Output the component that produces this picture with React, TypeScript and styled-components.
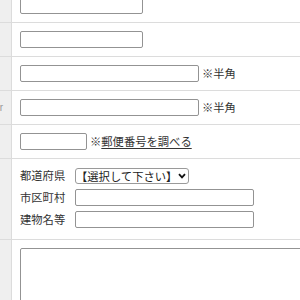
import { createGlobalStyle, styled } from "styled-components";

const GlobalStyle = createGlobalStyle`
  html, body {
    margin: 0;
    padding: 0;
    background: #fff;
    overflow: hidden;
  }
  body {
    font-family: "Noto Sans CJK JP", "Noto Sans", sans-serif;
    color: #333;
  }
`;

const FormTable = styled.div`
  margin-top: -11px;
  width: 420px;
`;

const Row = styled.div`
  display: grid;
  grid-template-columns: 12px 1fr;
  border-bottom: 1px solid #dcdcdc;
`;

const Head = styled.div`
  background: #efefef;
  border-right: 1px solid #dcdcdc;
  display: flex;
  align-items: center;
  justify-content: flex-end;
  overflow: hidden;
  padding-right: 8px;
  white-space: nowrap;
  font-family: "Liberation Sans", Arial, sans-serif;
  font-size: 10px;
  color: #999;
`;

const Cell = styled.div<{ $bottom?: number }>`
  display: flex;
  align-items: center;
  padding: 8px 0 ${(p) => p.$bottom ?? 8}px 8px;
  font-size: 11.3px;
  line-height: 17px;
`;

const TextInput = styled.input<{ $w: number }>`
  box-sizing: border-box;
  width: ${(p) => p.$w}px;
  height: 17px;
  margin: 0;
  border: 1px solid #939393;
  border-radius: 2px;
  background: #fff;
  padding: 0 3px;
  outline: none;
`;

const Note = styled.span`
  margin-left: 3px;
  white-space: nowrap;
`;

const LinkText = styled.a`
  color: #333;
  text-decoration: underline;
  text-underline-offset: 2px;
`;

const Address = styled.div`
  display: flex;
  flex-direction: column;
  gap: 5px;
`;

const AddrLine = styled.div`
  display: flex;
  align-items: center;
  height: 17px;
`;

const AddrLabel = styled.span`
  width: 55px;
  white-space: nowrap;
`;

const SelectWrap = styled.div`
  position: relative;
  display: flex;
`;

const Select = styled.select`
  appearance: none;
  box-sizing: border-box;
  width: 114px;
  height: 16px;
  margin: 0;
  padding: 0 0 0 0;
  border: 1px solid #9a9a9a;
  border-radius: 3px;
  background: #fff;
  font-family: "Noto Sans CJK JP", sans-serif;
  font-size: 11.3px;
  line-height: 14px;
  color: #222;
`;

const Chevron = styled.svg`
  position: absolute;
  right: 3px;
  top: 5px;
  pointer-events: none;
`;

const TextArea = styled.textarea`
  box-sizing: border-box;
  width: 400px;
  height: 80px;
  margin: 0;
  border: 1px solid #939393;
  border-radius: 2px;
  resize: none;
`;

export default function App() {
  return (
    <>
      <GlobalStyle />
      <FormTable>
        <Row>
          <Head />
          <Cell>
            <TextInput $w={123} />
          </Cell>
        </Row>
        <Row>
          <Head />
          <Cell>
            <TextInput $w={123} />
          </Cell>
        </Row>
        <Row>
          <Head />
          <Cell>
            <TextInput $w={179} />
            <Note>※半角</Note>
          </Cell>
        </Row>
        <Row>
          <Head>Fax Number</Head>
          <Cell>
            <TextInput $w={179} />
            <Note>※半角</Note>
          </Cell>
        </Row>
        <Row>
          <Head />
          <Cell>
            <TextInput $w={67} />
            <Note>
              ※<LinkText href="#">郵便番号を調べる</LinkText>
            </Note>
          </Cell>
        </Row>
        <Row>
          <Head />
          <Cell $bottom={11}>
            <Address>
              <AddrLine>
                <AddrLabel>都道府県</AddrLabel>
                <SelectWrap>
                  <Select defaultValue="">
                    <option value="">【選択して下さい】</option>
                  </Select>
                  <Chevron width="8" height="6" viewBox="0 0 8 6">
                    <path d="M1 1.2 L4 4.4 L7 1.2" fill="none" stroke="#111" strokeWidth="1.8" />
                  </Chevron>
                </SelectWrap>
              </AddrLine>
              <AddrLine>
                <AddrLabel>市区町村</AddrLabel>
                <TextInput $w={179} />
              </AddrLine>
              <AddrLine>
                <AddrLabel>建物名等</AddrLabel>
                <TextInput $w={179} />
              </AddrLine>
            </Address>
          </Cell>
        </Row>
        <Row>
          <Head />
          <Cell>
            <TextArea />
          </Cell>
        </Row>
      </FormTable>
    </>
  );
}
